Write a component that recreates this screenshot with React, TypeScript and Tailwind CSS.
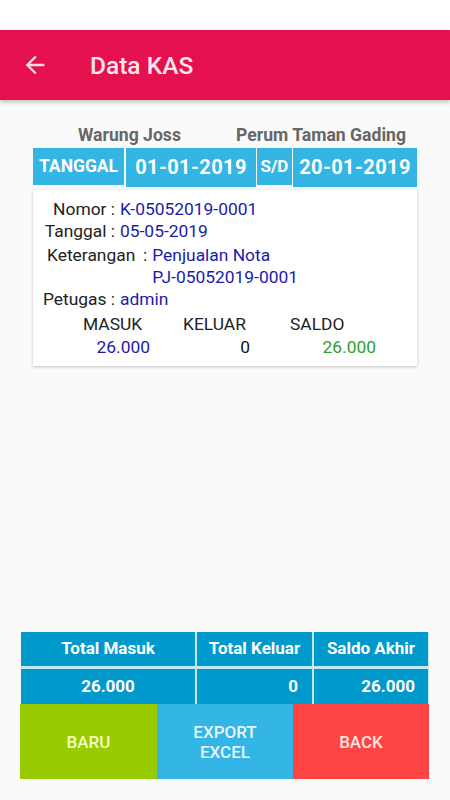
import React from "react";

export default function App() {
  const font = { fontFamily: "Roboto, 'Noto Sans', sans-serif" };
  return (
    <div className="w-[450px] h-[800px] flex flex-col bg-[#fafafa] overflow-hidden" style={font}>
      <div className="h-[30px] bg-white shrink-0" />
      <div className="h-[70px] shrink-0 bg-[#e5104e] flex items-center shadow-[0_2px_4px_rgba(0,0,0,0.25)] relative z-10">
        <svg viewBox="0 0 24 24" className="w-[28px] h-[28px] ml-[21px]" fill="#f8dbe4">
          <path d="M20 11H7.83l5.59-5.59L12 4l-8 8 8 8 1.41-1.41L7.83 13H20v-2z" />
        </svg>
        <div className="ml-[41px] text-[24.5px] font-medium text-[#fbe7ed] leading-none mt-[2px]">Data KAS</div>
      </div>

      <div className="px-[33px]">
        <div className="mt-[25px] flex justify-between pl-[45px] pr-[11px] text-[17.6px] font-bold text-[#666666] leading-[20px]">
          <span>Warung Joss</span>
          <span>Perum Taman Gading</span>
        </div>
        <div className="mt-[3px] flex items-start text-white font-bold">
          <div className="w-[91px] h-[37px] bg-[#33b5e5] flex items-center justify-center text-[17.5px]">TANGGAL</div>
          <div className="ml-[2px] w-[130px] h-[39px] bg-[#33b5e5] flex items-center justify-center text-[20px] tracking-[0.4px] pb-[2px]">01-01-2019</div>
          <div className="ml-[1px] w-[35px] h-[37px] bg-[#33b5e5] flex items-center justify-center text-[17px]">S/D</div>
          <div className="ml-[1px] w-[124px] h-[39px] bg-[#33b5e5] flex items-center justify-center text-[20px] tracking-[0.4px] pb-[2px]">20-01-2019</div>
        </div>
        <div className="mt-[3px] bg-white shadow-[0_1px_3px_rgba(0,0,0,0.22)] pt-[8px] pb-[8px] text-[17.4px] leading-[22px] text-[#222222]">
          <div className="flex">
            <span className="w-[82px] text-right whitespace-pre">Nomor :</span>
            <span className="ml-[5px] text-[#1b1ba8]">K-05052019-0001</span>
          </div>
          <div className="flex">
            <span className="w-[82px] text-right whitespace-pre">Tanggal :</span>
            <span className="ml-[5px] text-[#1b1ba8]">05-05-2019</span>
          </div>
          <div className="flex pl-[14px] mt-[2px]">
            <span className="w-[96px]">Keterangan</span>
            <span>:</span>
            <div className="ml-[5px] text-[#1b1ba8]">
              <div>Penjualan Nota</div>
              <div>PJ-05052019-0001</div>
            </div>
          </div>
          <div className="flex">
            <span className="w-[82px] text-right whitespace-pre">Petugas :</span>
            <span className="ml-[5px] text-[#1b1ba8]">admin</span>
          </div>
          <div className="flex pl-[50px] mt-[3px]">
            <span className="w-[100px]">MASUK</span>
            <span className="w-[107px]">KELUAR</span>
            <span>SALDO</span>
          </div>
          <div className="flex mt-[1px]">
            <span className="w-[117px] text-right text-[#1b1ba8]">26.000</span>
            <span className="w-[100px] text-right text-[#111111]">0</span>
            <span className="w-[126px] text-right text-[#2e9e2e]">26.000</span>
          </div>
        </div>
      </div>

      <div className="mt-auto pb-[21px] px-[20px]">
        <div className="mx-[1px] grid grid-cols-[174px_115px_114px] grid-rows-[34px_35px] gap-x-[2px] gap-y-[3px] bg-[#c4e8f4] text-white font-bold text-[17px]">
          <div className="bg-[#0099cc] flex items-center justify-center">Total Masuk</div>
          <div className="bg-[#0099cc] flex items-center justify-center">Total Keluar</div>
          <div className="bg-[#0099cc] flex items-center justify-center">Saldo Akhir</div>
          <div className="bg-[#0099cc] flex items-center justify-center">26.000</div>
          <div className="bg-[#0099cc] flex items-center justify-end pr-[14px]">0</div>
          <div className="bg-[#0099cc] flex items-center justify-end pr-[13px]">26.000</div>
        </div>
        <div className="flex h-[75px] text-[17px] font-medium leading-[20px]">
          <div className="w-[137px] bg-[#99cc00] flex items-center justify-center text-[#f4fac4]">BARU</div>
          <div className="w-[136px] bg-[#33b5e5] flex items-center justify-center text-center text-[#e6f6fc]">EXPORT<br />EXCEL</div>
          <div className="w-[136px] bg-[#ff4444] flex items-center justify-center text-[#ffe4e4]">BACK</div>
        </div>
      </div>
    </div>
  );
}
